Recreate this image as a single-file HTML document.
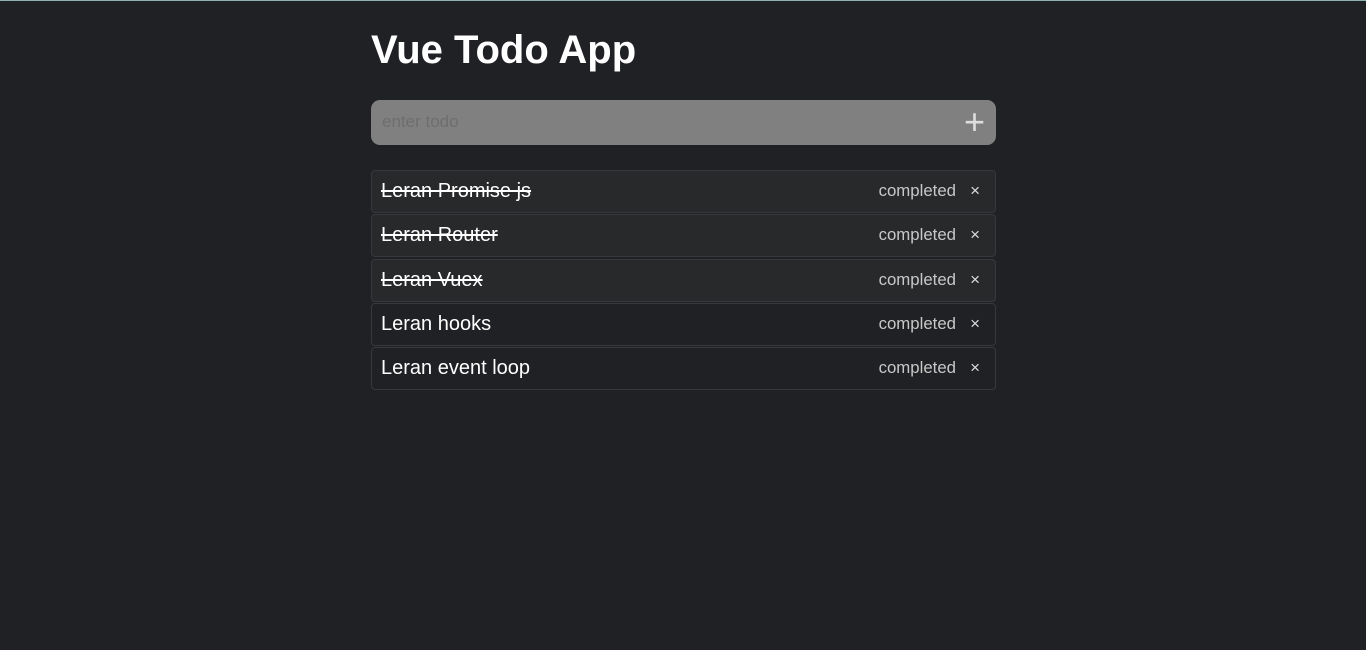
<!DOCTYPE html>
<html><head><style>
html,body{margin:0;padding:0;}
body{background:#202124;width:1366px;height:650px;font-family:"Liberation Sans",sans-serif;overflow:hidden;position:relative;}
.topline{position:absolute;left:0;top:0;width:1366px;height:1px;background:#8fb3b5;}
h1{position:absolute;left:371px;top:28px;margin:0;font-size:40px;font-weight:bold;color:#fff;line-height:44px;}
.inp{position:absolute;left:371px;top:100px;width:625px;height:45px;background:#808080;border-radius:9px;}
.inp .ph{position:absolute;left:11px;top:12px;font-size:17px;color:#6e6e6e;}
.inp .plus{position:absolute;right:11px;top:4px;font-size:36px;color:#ddd;line-height:36px;font-weight:300;}
.item{position:absolute;left:371px;width:623px;height:41px;border:1px solid #37383b;border-radius:4px;box-sizing:content-box;}
.item.done{background:#28292b;}
.t{position:absolute;left:9px;top:8px;font-size:20px;color:#fff;line-height:24px;}
.done .t{text-decoration:line-through;}
.c{position:absolute;right:39px;top:10px;font-size:16.8px;color:#c8c8c8;line-height:20px;}
.x{position:absolute;right:15px;top:10px;font-size:17px;color:#ddd;line-height:20px;}
</style></head><body>
<div class="topline"></div>
<h1>Vue Todo App</h1>
<div class="inp"><span class="ph">enter todo</span><span class="plus">+</span></div>
<div class="item done" style="top:170px"><span class="t">Leran Promise js</span><span class="c">completed</span><span class="x">×</span></div>
<div class="item done" style="top:214px"><span class="t">Leran Router</span><span class="c">completed</span><span class="x">×</span></div>
<div class="item done" style="top:259px"><span class="t">Leran Vuex</span><span class="c">completed</span><span class="x">×</span></div>
<div class="item" style="top:303px"><span class="t">Leran hooks</span><span class="c">completed</span><span class="x">×</span></div>
<div class="item" style="top:347px"><span class="t">Leran event loop</span><span class="c">completed</span><span class="x">×</span></div>
</body></html>
